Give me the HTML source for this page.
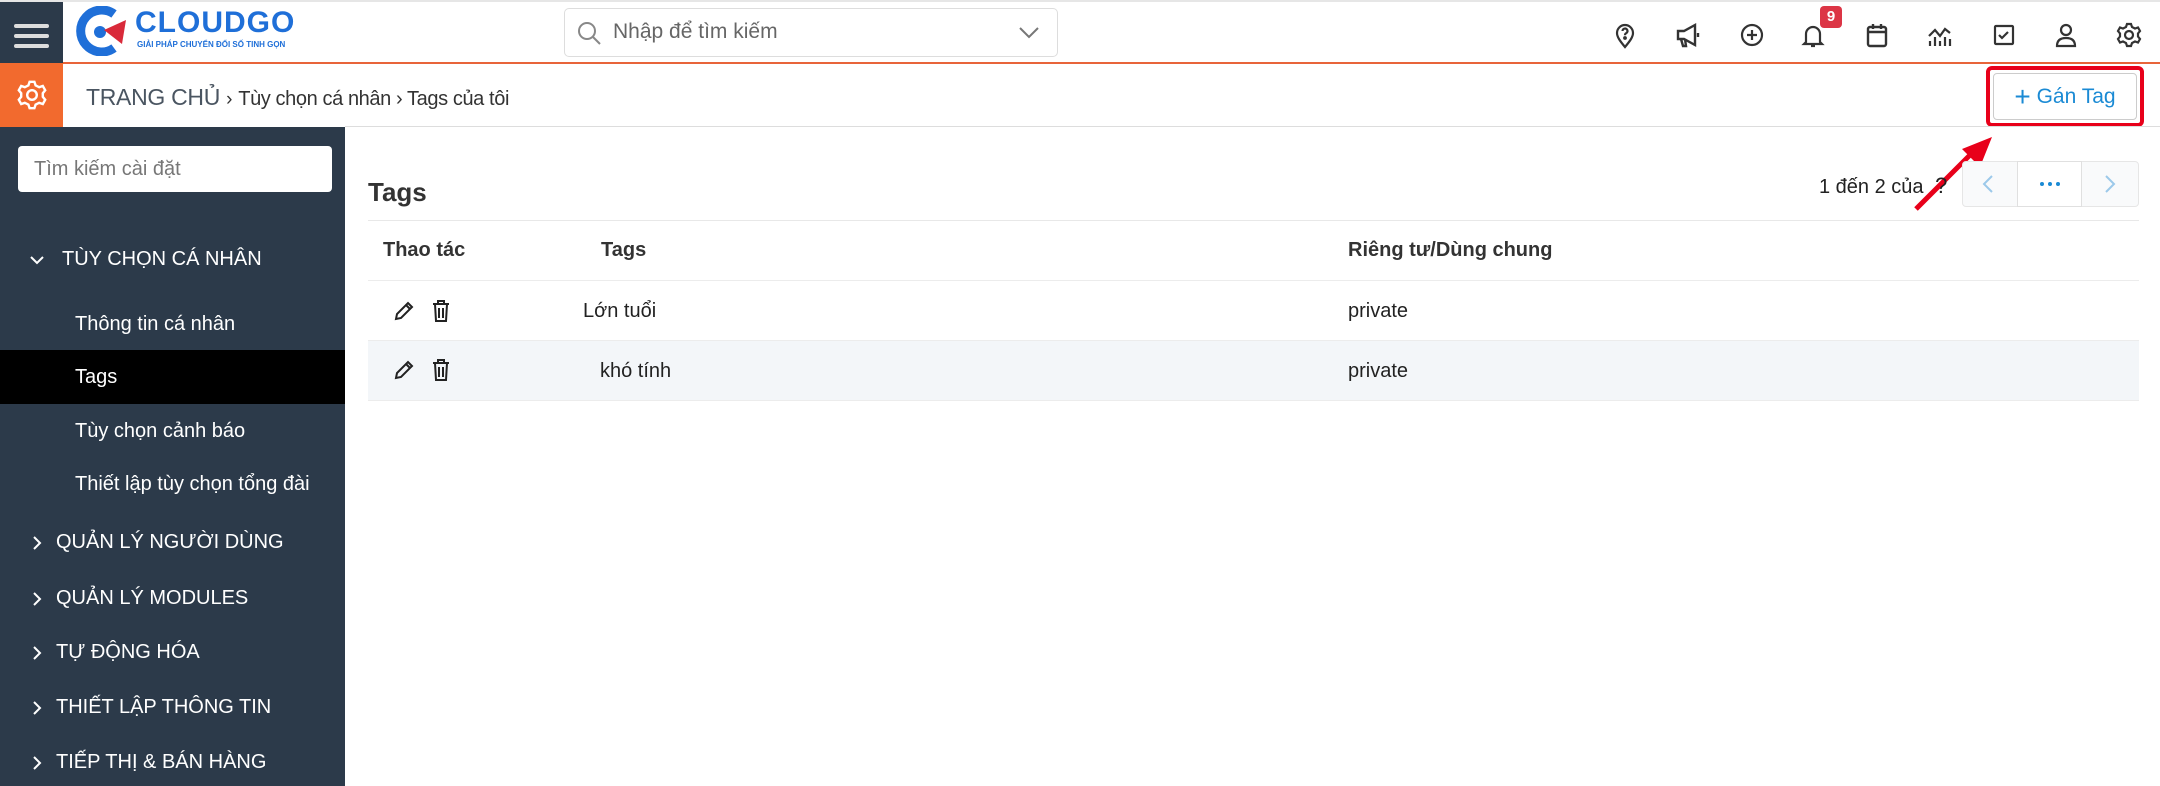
<!DOCTYPE html>
<html><head><meta charset="utf-8"><style>
*{box-sizing:border-box;margin:0;padding:0}
body{width:2160px;height:786px;overflow:hidden;background:#fff;font-family:"Liberation Sans","DejaVu Sans",sans-serif;color:#222;position:relative}
.a{position:absolute}
.ic{position:absolute;top:20px;width:30px;height:30px}
.side{left:0;top:127px;width:345px;height:659px;background:#2c3a4a}
.si{position:absolute;color:#fff;font-size:20px;white-space:nowrap}
.chev{position:absolute;left:30px;width:14px;height:14px}
.t{position:absolute;font-size:20px;white-space:nowrap;color:#222}
</style></head><body>
<div class="a" style="left:0;top:0;width:2160px;height:2px;background:#e6e6e6"></div>
<div class="a" style="left:0;top:2px;width:63px;height:61px;background:#2c3a4a"></div>
<div class="a" style="left:14px;top:24px;width:35px;height:4px;background:#ddd;border-radius:2px"></div>
<div class="a" style="left:14px;top:34px;width:35px;height:4px;background:#ddd;border-radius:2px"></div>
<div class="a" style="left:14px;top:44px;width:35px;height:4px;background:#ddd;border-radius:2px"></div>
<svg class="a" style="left:74px;top:6px" width="56" height="50" viewBox="0 0 56 50"><path d="M40 8 A21 21 0 1 0 40 42" fill="none" stroke="#1f6fd8" stroke-width="9"/><circle cx="26" cy="26" r="6" fill="#1f6fd8"/><path d="M30 24 L52 14 L48 38 Z" fill="#d92a3a"/></svg>
<div class="a" style="left:135px;top:6px;font-size:30px;font-weight:bold;color:#1f6fd8;letter-spacing:1px">CLOUDGO</div>
<div class="a" style="left:137px;top:40px;font-size:8px;font-weight:bold;color:#1f6fd8">GIẢI PHÁP CHUYỂN ĐỔI SỐ TINH GỌN</div>
<div class="a" style="left:564px;top:8px;width:494px;height:49px;border:1px solid #ddd;border-radius:5px"></div>
<svg class="a" style="left:576px;top:20px" width="26" height="26" viewBox="0 0 26 26"><circle cx="11" cy="11" r="8" fill="none" stroke="#888" stroke-width="2"/><path d="M17 17l7 7" stroke="#888" stroke-width="2"/></svg>
<div class="a" style="left:613px;top:20px;font-size:21px;color:#666">Nhập để tìm kiếm</div>
<svg class="a" style="left:1018px;top:26px" width="22" height="14" viewBox="0 0 22 14"><path d="M2 2l9 9 9-9" fill="none" stroke="#777" stroke-width="2"/></svg>
<svg class="ic" style="left:1610px" viewBox="0 0 30 30" fill="none" stroke="#333" stroke-width="2.2"><path d="M15 27c-5-6-8-10-8-14a8 8 0 0 1 16 0c0 4-3 8-8 14z"/><path d="M12.5 11a2.5 2.5 0 1 1 3.5 2.3c-1 .5-1 1-1 2"/><circle cx="15" cy="18" r=".8" fill="#333"/></svg>
<svg class="ic" style="left:1673px" viewBox="0 0 30 30" fill="none" stroke="#333" stroke-width="2.4"><path d="M5 11h6l11-6v20l-11-6H5z"/><path d="M8 19l2 7h3l-1-7"/><path d="M25 13v4"/></svg>
<svg class="ic" style="left:1737px" viewBox="0 0 30 30" fill="none" stroke="#333" stroke-width="2.2"><circle cx="15" cy="15" r="10"/><path d="M15 10v10M10 15h10"/></svg>
<svg class="ic" style="left:1798px" viewBox="0 0 30 30" fill="none" stroke="#333" stroke-width="2.2"><path d="M8 22V14a7 7 0 0 1 14 0v8l2 2H6z"/><path d="M13 26h4"/></svg>
<div class="a" style="left:1820px;top:6px;width:22px;height:22px;background:#dc3545;border-radius:4px;color:#fff;font-size:15px;font-weight:bold;text-align:center;line-height:22px">9</div>
<svg class="ic" style="left:1862px" viewBox="0 0 30 30" fill="none" stroke="#333" stroke-width="2.4"><rect x="6" y="7" width="18" height="19" rx="2"/><path d="M6 12h18M11 4v5M19 4v5"/></svg>
<svg class="ic" style="left:1925px" viewBox="0 0 30 30" fill="none" stroke="#333" stroke-width="2.2"><path d="M4 16l6-6 5 6 5-7 5 4"/><path d="M5 21v5M10 17v9M15 21v5M20 17v9M25 19v7"/></svg>
<svg class="ic" style="left:1989px" viewBox="0 0 30 30" fill="none" stroke="#333" stroke-width="2.2"><rect x="6" y="6" width="18" height="18" rx="1"/><path d="M10 15l3 3 6-6"/></svg>
<svg class="ic" style="left:2051px" viewBox="0 0 30 30" fill="none" stroke="#333" stroke-width="2.2"><circle cx="15" cy="10" r="5"/><path d="M6 26c0-6 4-8 9-8s9 2 9 8z"/></svg>
<svg class="ic" style="left:2114px" viewBox="0 0 30 30" fill="none" stroke="#333" stroke-width="2.2"><circle cx="15" cy="15" r="4"/><path d="M13 4h4l1 3 3 1.5 3-1 2 3.5-2 2.5v3l2 2.5-2 3.5-3-1-3 1.5-1 3h-4l-1-3-3-1.5-3 1-2-3.5 2-2.5v-3l-2-2.5 2-3.5 3 1 3-1.5z"/></svg>
<div class="a" style="left:63px;top:62px;width:2097px;height:2px;background:#e8643a"></div>
<div class="a" style="left:0;top:63px;width:63px;height:64px;background:#f26a2e"></div>
<svg class="a" style="left:14px;top:77px" width="36" height="36" viewBox="0 0 30 30" fill="none" stroke="#fff" stroke-width="2"><circle cx="15" cy="15" r="4"/><path d="M13 4h4l1 3 3 1.5 3-1 2 3.5-2 2.5v3l2 2.5-2 3.5-3-1-3 1.5-1 3h-4l-1-3-3-1.5-3 1-2-3.5 2-2.5v-3l-2-2.5 2-3.5 3 1 3-1.5z"/></svg>
<div class="a" style="left:86px;top:84px;font-size:23px;color:#4a5561;letter-spacing:-0.3px">TRANG CHỦ <span style="font-size:19px;color:#333">›</span> <span style="font-size:20px;color:#333;letter-spacing:-0.4px">Tùy chọn cá nhân › Tags của tôi</span></div>
<div class="a" style="left:1986px;top:66px;width:158px;height:61px;border:4px solid #e8001a;border-radius:6px"></div>
<div class="a" style="left:1993px;top:73px;width:144px;height:47px;border:1px solid #ccc;border-radius:4px;background:#fff;color:#1a8ad4;font-size:21px;text-align:center;line-height:45px"><span style="font-size:28px;vertical-align:-3px">+</span> Gán Tag</div>
<div class="a" style="left:345px;top:126px;width:1815px;height:1px;background:#ddd"></div>
<svg class="a" style="left:1910px;top:133px" width="90" height="80" viewBox="0 0 90 80"><path d="M6 76 L62 20" stroke="#e8001a" stroke-width="5"/><path d="M52 16 L82 4 L70 34 Z" fill="#e8001a"/></svg>
<div class="a side"></div>
<div class="a" style="left:18px;top:146px;width:314px;height:46px;background:#fff;border-radius:4px"></div>
<div class="a" style="left:34px;top:158px;font-size:20px;color:#777">Tìm kiếm cài đặt</div>
<svg class="chev" style="top:253px" viewBox="0 0 14 14" fill="none" stroke="#fff" stroke-width="2"><path d="M1 4l6 6 6-6"/></svg>
<div class="si" style="left:62px;top:248px">TÙY CHỌN CÁ NHÂN</div>
<div class="si" style="left:75px;top:313px">Thông tin cá nhân</div>
<div class="a" style="left:0;top:350px;width:345px;height:54px;background:#000"></div>
<div class="si" style="left:75px;top:366px">Tags</div>
<div class="si" style="left:75px;top:420px">Tùy chọn cảnh báo</div>
<div class="si" style="left:75px;top:473px">Thiết lập tùy chọn tổng đài</div>
<svg class="chev" style="top:536px" viewBox="0 0 14 14" fill="none" stroke="#fff" stroke-width="2"><path d="M4 1l6 6-6 6"/></svg>
<div class="si" style="left:56px;top:531px">QUẢN LÝ NGƯỜI DÙNG</div>
<svg class="chev" style="top:592px" viewBox="0 0 14 14" fill="none" stroke="#fff" stroke-width="2"><path d="M4 1l6 6-6 6"/></svg>
<div class="si" style="left:56px;top:587px">QUẢN LÝ MODULES</div>
<svg class="chev" style="top:646px" viewBox="0 0 14 14" fill="none" stroke="#fff" stroke-width="2"><path d="M4 1l6 6-6 6"/></svg>
<div class="si" style="left:56px;top:641px">TỰ ĐỘNG HÓA</div>
<svg class="chev" style="top:701px" viewBox="0 0 14 14" fill="none" stroke="#fff" stroke-width="2"><path d="M4 1l6 6-6 6"/></svg>
<div class="si" style="left:56px;top:696px">THIẾT LẬP THÔNG TIN</div>
<svg class="chev" style="top:756px" viewBox="0 0 14 14" fill="none" stroke="#fff" stroke-width="2"><path d="M4 1l6 6-6 6"/></svg>
<div class="si" style="left:56px;top:751px">TIẾP THỊ &amp; BÁN HÀNG</div>
<div class="t" style="left:368px;top:177px;font-size:26px;font-weight:bold;color:#333">Tags</div>
<div class="t" style="left:1819px;top:173px">1 đến 2 của <span style="font-size:22px;margin-left:6px">?</span></div>
<div class="a" style="left:1962px;top:161px;width:177px;height:46px;border:1px solid #e6e6e6;border-radius:4px;background:#f9fafb"></div>
<div class="a" style="left:2017px;top:161px;width:65px;height:46px;border:1px solid #e0e0e0;background:#fff"></div>
<div class="a" style="left:2040px;top:182px;width:4px;height:4px;border-radius:2px;background:#1a8ad4;box-shadow:8px 0 #1a8ad4,16px 0 #1a8ad4"></div>
<svg class="a" style="left:1982px;top:174px" width="12" height="20" viewBox="0 0 12 20" fill="none" stroke="#9cc9ea" stroke-width="2"><path d="M10 2L2 10l8 8"/></svg>
<svg class="a" style="left:2104px;top:174px" width="12" height="20" viewBox="0 0 12 20" fill="none" stroke="#9cc9ea" stroke-width="2"><path d="M2 2l8 8-8 8"/></svg>
<div class="a" style="left:368px;top:220px;width:1771px;height:1px;background:#e8e8e8"></div>
<div class="t" style="left:383px;top:239px;font-weight:bold;color:#333">Thao tác</div>
<div class="t" style="left:601px;top:239px;font-weight:bold;color:#333">Tags</div>
<div class="t" style="left:1348px;top:239px;font-weight:bold;color:#333">Riêng tư/Dùng chung</div>
<div class="a" style="left:368px;top:280px;width:1771px;height:1px;background:#ececec"></div>
<div class="a" style="left:368px;top:340px;width:1771px;height:61px;background:#f3f6f9;border-top:1px solid #ececec;border-bottom:1px solid #ececec"></div>
<svg class="a" style="left:393px;top:300px" width="22" height="22" viewBox="0 0 22 22" fill="none" stroke="#222" stroke-width="2"><path d="M3 19l1-5L15 3l4 4L8 18z"/><path d="M13 5l4 4"/></svg>
<svg class="a" style="left:431px;top:299px" width="20" height="24" viewBox="0 0 20 24" fill="none" stroke="#222" stroke-width="2"><path d="M2 5h16M7 5V2h6v3M4 5l1 17h10l1-17M8 9v10M12 9v10"/></svg>
<svg class="a" style="left:393px;top:359px" width="22" height="22" viewBox="0 0 22 22" fill="none" stroke="#222" stroke-width="2"><path d="M3 19l1-5L15 3l4 4L8 18z"/><path d="M13 5l4 4"/></svg>
<svg class="a" style="left:431px;top:358px" width="20" height="24" viewBox="0 0 20 24" fill="none" stroke="#222" stroke-width="2"><path d="M2 5h16M7 5V2h6v3M4 5l1 17h10l1-17M8 9v10M12 9v10"/></svg>
<div class="t" style="left:583px;top:300px">Lớn tuổi</div>
<div class="t" style="left:1348px;top:300px">private</div>
<div class="t" style="left:600px;top:360px">khó tính</div>
<div class="t" style="left:1348px;top:360px">private</div>
</body></html>
